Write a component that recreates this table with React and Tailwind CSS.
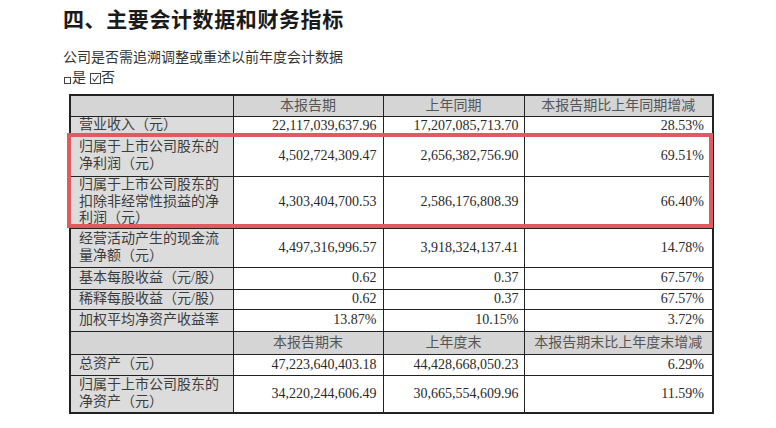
import React from 'react';

const topRows = [
  { label: ['营业收入（元）'], a: '22,117,039,637.96', b: '17,207,085,713.70', c: '28.53%', h: 'h-[19px]' },
  { label: ['归属于上市公司股东的', '净利润（元）'], a: '4,502,724,309.47', b: '2,656,382,756.90', c: '69.51%', h: 'h-[41px]' },
  { label: ['归属于上市公司股东的', '扣除非经常性损益的净', '利润（元）'], a: '4,303,404,700.53', b: '2,586,176,808.39', c: '66.40%', h: 'h-[52px]' },
  { label: ['经营活动产生的现金流', '量净额（元）'], a: '4,497,316,996.57', b: '3,918,324,137.41', c: '14.78%', h: 'h-[39px]' },
  { label: ['基本每股收益（元/股）'], a: '0.62', b: '0.37', c: '67.57%', h: 'h-[22px]' },
  { label: ['稀释每股收益（元/股）'], a: '0.62', b: '0.37', c: '67.57%', h: 'h-[20px]' },
  { label: ['加权平均净资产收益率'], a: '13.87%', b: '10.15%', c: '3.72%', h: 'h-[22px]' },
];

const bottomRows = [
  { label: ['总资产（元）'], a: '47,223,640,403.18', b: '44,428,668,050.23', c: '6.29%', h: 'h-[21px]' },
  { label: ['归属于上市公司股东的', '净资产（元）'], a: '34,220,244,606.49', b: '30,665,554,609.96', c: '11.59%', h: 'h-[38px]' },
];

function HeaderRow({ cols, h }) {
  return (
    <tr className={h}>
      <td className="border border-[#222] bg-[#d5d5d5] p-0"></td>
      {cols.map((c) => (
        <td key={c} className="border border-[#222] bg-[#d5d5d5] text-center text-[#555] leading-[16px] p-0">
          {c}
        </td>
      ))}
    </tr>
  );
}

function DataRow({ row }) {
  return (
    <tr className={row.h}>
      <td className="border border-[#222] bg-[#dcdcdc] pl-[8px] pr-0 py-0 text-left text-[#3c3c3c] leading-[16.5px] whitespace-nowrap">
        {row.label.map((l) => (
          <div key={l}>{l}</div>
        ))}
      </td>
      <td className="border border-[#222] bg-white text-right pr-[6px] py-0 text-[#2a2a2a]">{row.a}</td>
      <td className="border border-[#222] bg-white text-right pr-[5px] py-0 text-[#2a2a2a]">{row.b}</td>
      <td className="border border-[#222] bg-white text-right pr-[8px] py-0 text-[#2a2a2a]">{row.c}</td>
    </tr>
  );
}

export default function App() {
  return (
    <div className="w-[776px] h-[428px] overflow-hidden bg-white pl-[63px] font-['Liberation_Serif','Noto_Sans_CJK_SC',serif]">
      <h1 className="pt-[4px] text-[21px] leading-[28px] font-bold text-[#1a1a1a] font-['Noto_Sans_CJK_SC',sans-serif] tracking-[0.6px]">
        四、主要会计数据和财务指标
      </h1>
      <p className="mt-[16px] text-[14px] leading-[20px] text-[#333]">公司是否需追溯调整或重述以前年度会计数据</p>
      <div className="flex items-center text-[14px] leading-[20px] text-[#333]">
        <span className="mt-[5px] mr-[1px] ml-[1px] inline-block w-[7px] h-[7px] border border-[#444]"></span>
        <span>是</span>
        <svg className="ml-[4px] mt-[1px]" width="11" height="11" viewBox="0 0 11 11">
          <rect x="0.5" y="0.5" width="10" height="10" fill="none" stroke="#444" strokeWidth="1" />
          <path d="M2.5 5.5 L4.5 8 L8.5 2.5" fill="none" stroke="#444" strokeWidth="1.1" />
        </svg>
        <span>否</span>
      </div>
      <div className="relative mt-[6px] ml-[6px] w-[643px]">
        <table className="w-[643px] border-collapse border-2 border-[#222] text-[14px] leading-[16px] table-fixed">
          <colgroup>
            <col className="w-[163px]" />
            <col className="w-[150px]" />
            <col className="w-[141px]" />
            <col className="w-[189px]" />
          </colgroup>
          <tbody>
            <HeaderRow cols={['本报告期', '上年同期', '本报告期比上年同期增减']} h="h-[21px]" />
            {topRows.map((r) => (
              <DataRow key={r.label.join('')} row={r} />
            ))}
            <HeaderRow cols={['本报告期末', '上年度末', '本报告期末比上年度末增减']} h="h-[23px]" />
            {bottomRows.map((r) => (
              <DataRow key={r.label.join('')} row={r} />
            ))}
          </tbody>
        </table>
        <div className="absolute left-[-2px] top-[39px] w-[646px] h-[95px] border-[4px] border-[#e05a60] pointer-events-none"></div>
      </div>
    </div>
  );
}
